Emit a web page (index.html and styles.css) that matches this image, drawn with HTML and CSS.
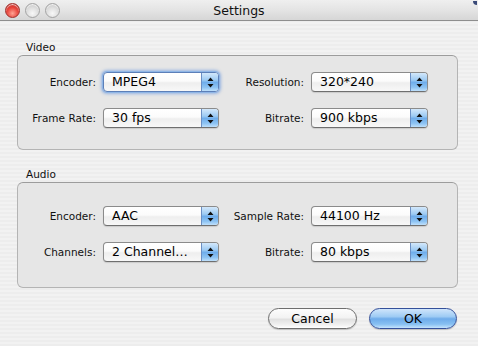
FILE: index.html
```html
<!DOCTYPE html>
<html>
<head>
<meta charset="utf-8">
<title>Settings</title>
<link rel="stylesheet" href="styles.css">
</head>
<body>
<div class="window">
  <div class="titlebar">
    <div class="lights">
      <span class="light red"></span>
      <span class="light"></span>
      <span class="light"></span>
    </div>
    <div class="title">Settings</div>
    <span class="corner"></span>
  </div>
  <div class="content">
    <div class="section-label">Video</div>
    <div class="group video">
      <label class="lbl">Encoder:</label>
      <div class="popup focus"><span class="val">MPEG4</span><span class="arrows"><svg width="7" height="11" viewBox="0 0 7 11"><path d="M3.5 0.5 L6.5 4 L0.5 4 Z M0.5 7 L6.5 7 L3.5 10.5 Z" fill="#111"/></svg></span></div>
      <label class="lbl">Resolution:</label>
      <div class="popup"><span class="val">320*240</span><span class="arrows"><svg width="7" height="11" viewBox="0 0 7 11"><path d="M3.5 0.5 L6.5 4 L0.5 4 Z M0.5 7 L6.5 7 L3.5 10.5 Z" fill="#111"/></svg></span></div>
      <label class="lbl">Frame Rate:</label>
      <div class="popup"><span class="val">30 fps</span><span class="arrows"><svg width="7" height="11" viewBox="0 0 7 11"><path d="M3.5 0.5 L6.5 4 L0.5 4 Z M0.5 7 L6.5 7 L3.5 10.5 Z" fill="#111"/></svg></span></div>
      <label class="lbl">Bitrate:</label>
      <div class="popup"><span class="val">900 kbps</span><span class="arrows"><svg width="7" height="11" viewBox="0 0 7 11"><path d="M3.5 0.5 L6.5 4 L0.5 4 Z M0.5 7 L6.5 7 L3.5 10.5 Z" fill="#111"/></svg></span></div>
    </div>
    <div class="section-label audio-label">Audio</div>
    <div class="group audio">
      <label class="lbl">Encoder:</label>
      <div class="popup"><span class="val">AAC</span><span class="arrows"><svg width="7" height="11" viewBox="0 0 7 11"><path d="M3.5 0.5 L6.5 4 L0.5 4 Z M0.5 7 L6.5 7 L3.5 10.5 Z" fill="#111"/></svg></span></div>
      <label class="lbl">Sample Rate:</label>
      <div class="popup"><span class="val">44100 Hz</span><span class="arrows"><svg width="7" height="11" viewBox="0 0 7 11"><path d="M3.5 0.5 L6.5 4 L0.5 4 Z M0.5 7 L6.5 7 L3.5 10.5 Z" fill="#111"/></svg></span></div>
      <label class="lbl">Channels:</label>
      <div class="popup"><span class="val">2 Channel…</span><span class="arrows"><svg width="7" height="11" viewBox="0 0 7 11"><path d="M3.5 0.5 L6.5 4 L0.5 4 Z M0.5 7 L6.5 7 L3.5 10.5 Z" fill="#111"/></svg></span></div>
      <label class="lbl">Bitrate:</label>
      <div class="popup"><span class="val">80 kbps</span><span class="arrows"><svg width="7" height="11" viewBox="0 0 7 11"><path d="M3.5 0.5 L6.5 4 L0.5 4 Z M0.5 7 L6.5 7 L3.5 10.5 Z" fill="#111"/></svg></span></div>
    </div>
    <div class="buttons">
      <button class="btn cancel">Cancel</button>
      <button class="btn ok">OK</button>
    </div>
  </div>
</div>
</body>
</html>
```
FILE: styles.css
```css
* { box-sizing: border-box; }
html, body { margin: 0; padding: 0; }
body {
  width: 478px;
  height: 346px;
  overflow: hidden;
  font-family: "DejaVu Sans", "Liberation Sans", sans-serif;
  color: #000;
}
.window {
  width: 478px;
  height: 346px;
  background: repeating-linear-gradient(180deg, #ededed 0px, #ededed 2px, #f2f2f2 2px, #f2f2f2 4px);
  display: flex;
  flex-direction: column;
}
.titlebar {
  height: 21px;
  display: flex;
  align-items: center;
  position: relative;
  background: linear-gradient(180deg, #efefef 0%, #e4e4e4 50%, #d6d6d6 100%);
  border-bottom: 1px solid #8e8e8e;
}
.lights {
  display: flex;
  gap: 5px;
  padding-left: 5px;
}
.light {
  width: 15px;
  height: 15px;
  border-radius: 50%;
  border: 1px solid #a3a3a3;
  background: radial-gradient(circle at 50% 72%, #f8f8f8 0%, #dedede 50%, #bdbdbd 100%);
  box-shadow: inset 0 1px 1px rgba(255,255,255,0.8);
}
.light.red {
  border-color: #9e2c28;
  background: radial-gradient(circle at 50% 72%, #ffa494 0%, #e8433a 50%, #b31a14 100%);
}
.title {
  position: absolute;
  left: 0;
  right: 0;
  top: 3px;
  text-align: center;
  font-size: 12.5px;
  color: #111;
}
.corner {
  position: absolute;
  right: 1px;
  top: 1px;
  width: 4px;
  height: 4px;
  border-radius: 0 0 0 4px;
  background: #3a4a78;
}
.content {
  display: flex;
  flex-direction: column;
  padding: 20px 20px 0 17px;
}
.section-label {
  font-size: 10.5px;
  line-height: 13px;
  padding-left: 9px;
  margin-bottom: 1px;
  color: #111;
}
.audio-label {
  margin-top: 18px;
}
.group {
  width: 441px;
  border: 1px solid #b4b4b4;
  border-top-color: #9c9c9c;
  border-radius: 6px;
  background: #e6e6e6;
  display: grid;
  grid-template-columns: 78px 116px 78px 117px;
  column-gap: 7px;
  row-gap: 16px;
  align-items: center;
}
.group.video {
  padding: 16px 0 21px 0;
}
.group.audio {
  padding: 23px 0 25px 0;
}
.lbl {
  font-size: 10.5px;
  text-align: right;
  color: #111;
  white-space: nowrap;
}
.popup {
  height: 20px;
  display: flex;
  border: 1px solid #8b8b8b;
  border-bottom-color: #6f6f6f;
  border-radius: 4px;
  overflow: hidden;
  background: linear-gradient(180deg, #ffffff 0%, #fbfbfb 45%, #eeeeee 55%, #f8f8f8 100%);
  box-shadow: 0 1px 1px rgba(0,0,0,0.12);
}
.popup.focus {
  box-shadow: 0 0 0 1px #8fb6e6, 0 0 3px 2px rgba(90,140,220,0.55);
  border-color: #5c7fb8;
}
.val {
  flex: 1;
  font-size: 12.5px;
  line-height: 18px;
  padding-left: 8px;
  white-space: nowrap;
  overflow: hidden;
}
.arrows {
  width: 17px;
  display: flex;
  align-items: center;
  justify-content: center;
  border-left: 1px solid #6b8fc4;
  background: linear-gradient(180deg, #d3e8fb 0%, #9ccaf3 40%, #6fadeb 52%, #8dc3f3 80%, #bfe0fb 100%);
}
.buttons {
  display: flex;
  justify-content: flex-end;
  gap: 12px;
  margin-top: 20px;
  padding-right: 1px;
}
.btn {
  width: 89px;
  height: 21px;
  border-radius: 11px;
  font-family: "DejaVu Sans", "Liberation Sans", sans-serif;
  font-size: 12.5px;
  color: #000;
  padding: 0;
  line-height: 18px;
}
.btn.cancel {
  border: 1px solid #6e6e6e;
  background: linear-gradient(180deg, #fdfdfd 0%, #f3f3f3 45%, #e1e1e1 55%, #f2f2f2 85%, #ffffff 100%);
  box-shadow: 0 1px 1px rgba(0,0,0,0.2);
}
.btn.ok {
  width: 88px;
  border: 1px solid #34509a;
  background: linear-gradient(180deg, #cfe5fb 0%, #9ecbf4 40%, #6eabea 52%, #87c0f2 80%, #c5e4fd 100%);
  box-shadow: 0 1px 1px rgba(0,0,0,0.2);
}
```
